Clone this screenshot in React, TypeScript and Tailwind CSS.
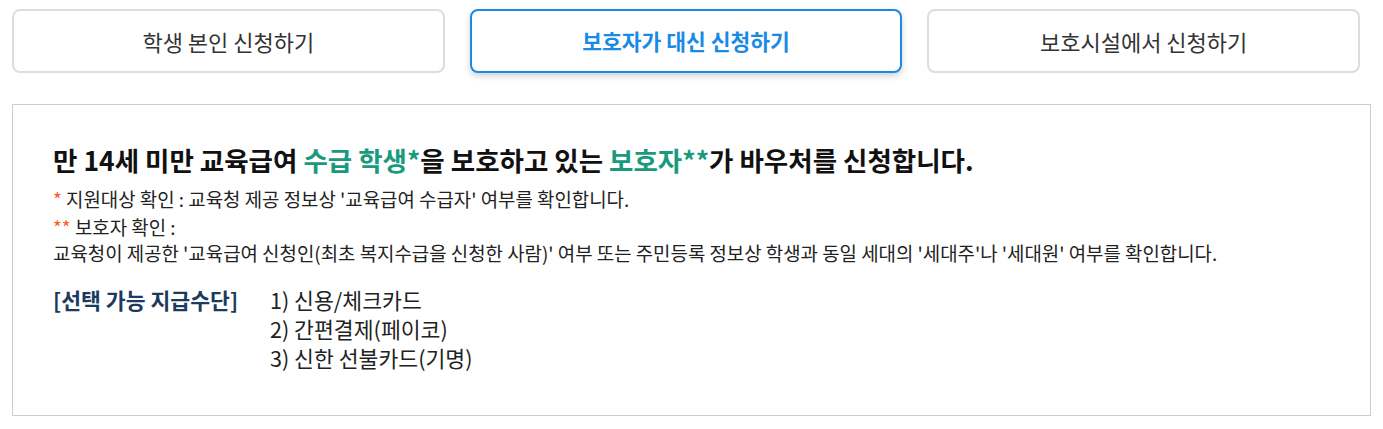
import React from "react";

const tabs = [
  { label: "학생 본인 신청하기", active: false },
  { label: "보호자가 대신 신청하기", active: true },
  { label: "보호시설에서 신청하기", active: false },
];

const payments = ["1) 신용/체크카드", "2) 간편결제(페이코)", "3) 신한 선불카드(기명)"];

export default function App() {
  return (
    <div
      className="min-h-screen bg-white pl-3 pt-[9px] text-[#222]"
      style={{ fontFamily: '"Noto Sans CJK KR", "Noto Sans", sans-serif' }}
    >
      <div className="grid w-[1348px] grid-cols-3 gap-[25px]">
        {tabs.map((tab) => (
          <button
            key={tab.label}
            className={
              tab.active
                ? "flex h-[64px] items-center justify-center rounded-lg border-2 border-[#1a8ae6] bg-white text-[21.5px] font-bold text-[#1a8ae6] shadow-[0_3px_6px_rgba(0,0,0,0.18)]"
                : "flex h-[64px] items-center justify-center rounded-lg border-2 border-[#dddddd] bg-white text-[22px] text-[#333]"
            }
          >
            {tab.label}
          </button>
        ))}
      </div>

      <div className="mt-[31px] h-[312px] w-[1359px] border border-[#cccccc] px-10 pt-[37px]">
        <h2 className="text-[26.5px] font-bold leading-[36px] text-[#111]">
          만 14세 미만 교육급여 <span className="text-[#1a9a7c]">수급 학생*</span>을 보호하고 있는{" "}
          <span className="text-[#1a9a7c]">보호자**</span>가 바우처를 신청합니다.
        </h2>
        <div className="mt-[7px] text-[18.9px] text-[#222]">
          <p className="leading-[28px]">
            <span className="text-[#ff5a1f]">*</span> 지원대상 확인 : 교육청 제공 정보상 '교육급여 수급자' 여부를 확인합니다.
          </p>
          <p className="leading-[28px]">
            <span className="text-[#ff5a1f]">**</span> 보호자 확인 :
          </p>
          <p className="leading-[24px]">
            교육청이 제공한 '교육급여 신청인(최초 복지수급을 신청한 사람)' 여부 또는 주민등록 정보상 학생과 동일 세대의 '세대주'나
            '세대원' 여부를 확인합니다.
          </p>
        </div>

        <div className="mt-[20px] flex text-[21.6px] leading-[29px]">
          <div className="w-[217px] text-[21.6px] font-bold text-[#1b3a5c]">[선택 가능 지급수단]</div>
          <ul>
            {payments.map((p) => (
              <li key={p}>{p}</li>
            ))}
          </ul>
        </div>
      </div>
    </div>
  );
}
